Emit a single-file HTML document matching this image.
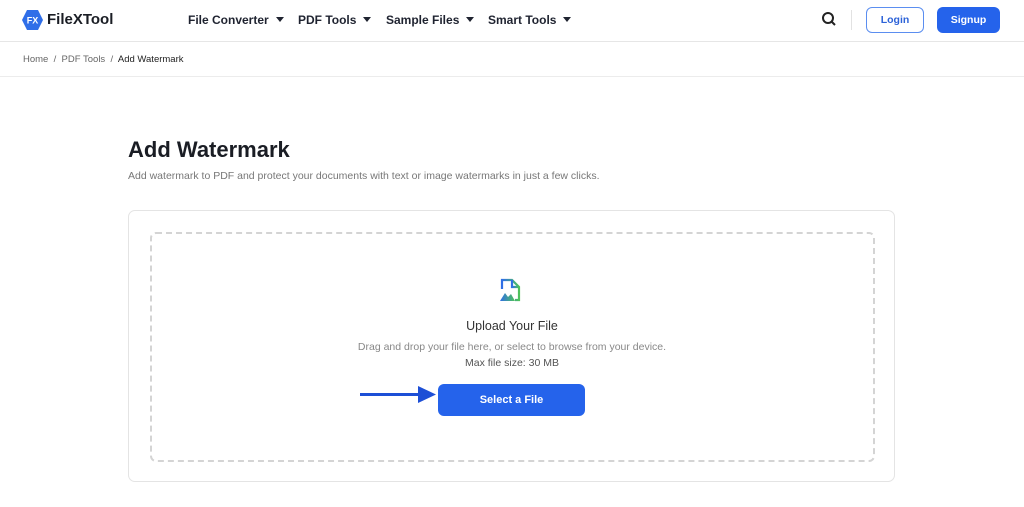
<!DOCTYPE html>
<html><head><meta charset="utf-8"><style>
*{box-sizing:border-box;margin:0;padding:0}
body{width:1024px;height:507px;overflow:hidden;background:#fff;font-family:"Liberation Sans",sans-serif;color:#1a1d24;position:relative}
.hdr{position:absolute;left:0;top:0;width:1024px;height:42px;border-bottom:1px solid #e6e6e6}
.abs{position:absolute}
.nav{font-size:12px;font-weight:bold;color:#1f2330;top:13px}
.nav:after{content:"";display:inline-block;margin-left:7px;border:4px solid transparent;border-top:5px solid #1f2330;border-bottom:0;vertical-align:2px}
.bc{position:absolute;top:43px;left:0;width:1024px;height:34px;border-bottom:1px solid #ececec;font-size:9.5px;color:#666;padding:11px 0 0 23px}
</style></head><body>
<div class="hdr">
 <svg class="abs" style="left:22px;top:10px" width="21" height="20" viewBox="0 0 21 20"><polygon points="5,0 16,0 21,10 16,20 5,20 0,10" fill="#2f6ee8"/><text x="10.5" y="13.5" font-size="9" font-weight="bold" fill="#fff" text-anchor="middle" font-family="Liberation Sans">FX</text></svg>
 <div class="abs" style="left:47px;top:11px;font-size:15px;font-weight:bold">FileXTool</div>
 <div class="abs nav" style="left:188px">File Converter</div>
 <div class="abs nav" style="left:298px">PDF Tools</div>
 <div class="abs nav" style="left:386px">Sample Files</div>
 <div class="abs nav" style="left:488px">Smart Tools</div>
 <svg class="abs" style="left:821px;top:11px" width="16" height="16" viewBox="0 0 16 16"><circle cx="7" cy="7" r="5" fill="none" stroke="#222" stroke-width="2"/><line x1="10.5" y1="10.5" x2="14" y2="14" stroke="#222" stroke-width="2"/></svg>
 <div class="abs" style="left:851px;top:10px;width:1px;height:20px;background:#e2e2e2"></div>
 <div class="abs" style="left:866px;top:7px;width:58px;height:26px;border:1px solid #5b8ef0;border-radius:6px;font-size:10.5px;font-weight:bold;color:#2d63d8;text-align:center;line-height:24px">Login</div>
 <div class="abs" style="left:937px;top:7px;width:63px;height:26px;background:#2563eb;border-radius:6px;font-size:10.5px;font-weight:bold;color:#fff;text-align:center;line-height:26px">Signup</div>
</div>
<div class="bc">Home &nbsp;/&nbsp; PDF Tools &nbsp;/&nbsp; <span style="color:#222">Add Watermark</span></div>
<div class="abs" style="left:128px;top:137px;font-size:22px;font-weight:bold">Add Watermark</div>
<div class="abs" style="left:128px;top:170px;font-size:10.5px;color:#777">Add watermark to PDF and protect your documents with text or image watermarks in just a few clicks.</div>
<div class="abs" style="left:128px;top:210px;width:767px;height:272px;border:1px solid #e4e4e4;border-radius:7px"></div>
<div class="abs" style="left:150px;top:232px;width:725px;height:230px;border:2px dashed #d4d4d4;border-radius:6px"></div>
<svg class="abs" style="left:499px;top:278px" width="24" height="24" viewBox="0 0 24 24"><defs><linearGradient id="g" x1="0" x2="1"><stop offset="0" stop-color="#2f6ee8"/><stop offset="1" stop-color="#4fc25a"/></linearGradient></defs><path d="M3 11V2h10l7 7v13h-4" fill="none" stroke="url(#g)" stroke-width="2.2"/><path d="M13 2v7h7" fill="none" stroke="url(#g)" stroke-width="2.2"/><path d="M1 23l5-8 3 4 3-3 4 7z" fill="url(#g)"/></svg>
<div class="abs" style="left:0;width:1024px;top:319px;text-align:center;font-size:12.5px;color:#333">Upload Your File</div>
<div class="abs" style="left:0;width:1024px;top:341px;text-align:center;font-size:10.5px;color:#888">Drag and drop your file here, or select to browse from your device.</div>
<div class="abs" style="left:0;width:1024px;top:357px;text-align:center;font-size:10.5px;color:#555">Max file size: 30 MB</div>
<div class="abs" style="left:360px;top:393px;width:62px;height:3px;background:#1d4fd6"></div>
<svg class="abs" style="left:418px;top:386px" width="18" height="17" viewBox="0 0 18 17"><polygon points="0,0 18,8.5 0,17" fill="#1d4fd6"/></svg>
<div class="abs" style="left:438px;top:384px;width:147px;height:32px;background:#2563eb;border-radius:6px;color:#fff;font-size:11px;font-weight:bold;text-align:center;line-height:32px">Select a File</div>
</body></html>
